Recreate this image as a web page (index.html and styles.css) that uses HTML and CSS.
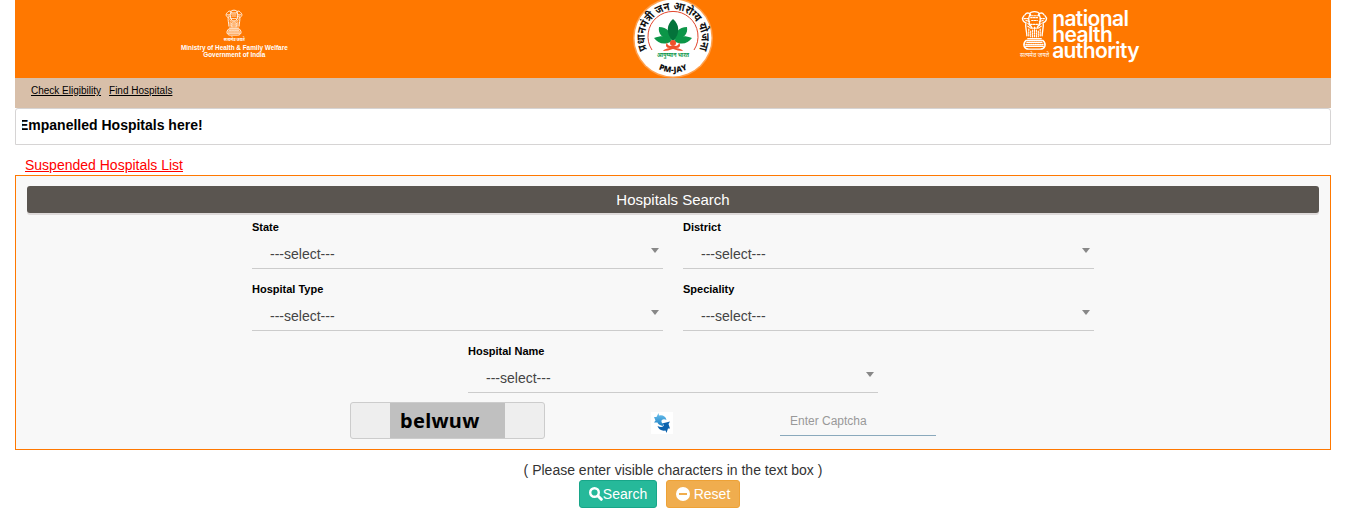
FILE: index.html
```html
<!DOCTYPE html>
<html lang="en">
<head>
  <meta charset="UTF-8">
  <meta name="viewport" content="width=device-width, initial-scale=1.0">
  <title>Hospitals Search</title>
  <link rel="stylesheet" href="styles.css">
</head>
<body>
  <!-- Shared national emblem drawing -->
  <svg class="symbols" width="0" height="0">
    <symbol id="emblem" viewBox="0 0 28 44">
      <g fill="none" stroke="#fff" stroke-linecap="round" stroke-linejoin="round">
        <path stroke-width="1.4" d="M9 4C10 1 18 1 19 4M4 5C6 2 10 3 10 6M24 5C22 2 18 3 18 6M3 6C0 9 2 12 4 13M25 6C28 9 26 12 24 13M9 5C7 9 8 15 11 18M19 5C21 9 20 15 17 18M5 13C4 18 6 22 6 27M23 13C24 18 22 22 22 27"/>
        <path stroke-width="1.2" stroke-dasharray="1.6 1.2" d="M11 6L17 6M10 8L18 8M11 11L17 11M3 9L8 9M20 9L25 9M5 11L9 12M19 12L23 11M10 15L18 15M7 17L10 19M18 19L21 17M11 19L17 19M12 21L12 29M16 21L16 29M8 20L8 28M20 20L20 28M14 18L14 29M7 14L9 16M19 16L21 14M10 22L10 28M18 22L18 28"/>
        <path stroke-width="1.5" d="M7 30H21M5 32C1 36 3 41 8 41H20C25 41 27 36 23 32ZM5 38H23"/>
        <path stroke-width="1.3" stroke-dasharray="1.4 1" d="M6 34H22M5 36H23"/>
      </g>
    </symbol>
  </svg>

  <div class="page">
    <header class="header">
      <div class="header-col">
        <div class="ministry">
          <svg class="ministry-emblem"><use href="#emblem"/></svg>
          <span class="motto">सत्यमेव जयते</span>
          <span>Ministry of Health &amp; Family Welfare</span>
          <span>Government of India</span>
        </div>
      </div>
      <div class="header-col">
        <svg class="pmjay" viewBox="0 0 80 78">
          <defs>
            <path id="ring" d="M16.500 54A28.300 28.300 0 1 1 63.500 54"/>
            <path id="arc-bottom" d="M5.500 38A34.500 34.500 0 0 0 74.500 38"/>
          </defs>
          <circle cx="40" cy="38" r="40" fill="#ffa04d"/>
          <circle cx="40" cy="38" r="38.500" fill="#fff"/>
          <path d="M19 50A25 25 0 1 1 61 50" fill="none" stroke="#e2452c" stroke-width="1"/>
          <text class="seal-top"><textPath href="#ring" startOffset="50%" text-anchor="middle" textLength="112" lengthAdjust="spacingAndGlyphs">प्रधानमंत्री जन आरोग्य योजना</textPath></text>
          <g fill="#0c9648">
            <path d="M40 40C28 39 25 33 26 27C34 27 39 33 40 40Z"/>
            <path d="M40 40C52 39 55 33 54 27C46 27 41 33 40 40Z"/>
            <path d="M39 41C31 46 25 43 21 38C29 35 36 36 39 41Z"/>
            <path d="M41 41C49 46 55 43 59 38C51 35 44 36 41 41Z"/>
          </g>
          <path d="M40 41C32 33 34 24 40 19C46 24 48 33 40 41Z" fill="#04733b"/>
          <g fill="#f0512a">
            <circle cx="40" cy="43" r="3"/>
            <path d="M34 42Q34 46 38 46H42Q46 46 46 42Q49 48 43 48Q49 49 50 51Q45 51 40 49Q35 51 30 51Q31 49 37 48Q31 48 34 42Z"/>
          </g>
          <text class="seal-name" x="40" y="57" text-anchor="middle" textLength="32" lengthAdjust="spacingAndGlyphs">आयुष्मान भारत</text>
          <text class="seal-bottom"><textPath href="#arc-bottom" startOffset="50%" text-anchor="middle" textLength="30">PM-JAY</textPath></text>
        </svg>
      </div>
      <div class="header-col">
        <div class="nha">
          <div class="nha-mark">
            <svg class="nha-emblem"><use href="#emblem"/></svg>
            <span class="motto">सत्यमेव जयते</span>
          </div>
          <div class="nha-name">
            <span>national</span>
            <span>health</span>
            <span>authority</span>
          </div>
        </div>
      </div>
    </header>

    <nav class="nav">
      <a href="#">Check Eligibility</a>
      <a href="#">Find Hospitals</a>
    </nav>

    <div class="ticker">
      <div class="ticker-view"><span class="ticker-text">Empanelled Hospitals here!</span></div>
    </div>

    <a class="suspended" href="#">Suspended Hospitals List</a>

    <main class="panel">
      <h1 class="panel-title">Hospitals Search</h1>

      <div class="fields">
        <div class="field">
          <span class="label">State</span>
          <div class="select">---select---</div>
        </div>
        <div class="field">
          <span class="label">District</span>
          <div class="select">---select---</div>
        </div>
        <div class="field">
          <span class="label">Hospital Type</span>
          <div class="select">---select---</div>
        </div>
        <div class="field">
          <span class="label">Speciality</span>
          <div class="select">---select---</div>
        </div>
        <div class="field field-center">
          <span class="label">Hospital Name</span>
          <div class="select">---select---</div>
        </div>
      </div>

      <div class="captcha-row">
        <div class="captcha"><span class="captcha-image">belwuw</span></div>
        <svg class="refresh" viewBox="0 0 22 22">
          <defs>
            <linearGradient id="light" x1="0" y1="0" x2="0" y2="1">
              <stop offset="0" stop-color="#6fc3ee"/>
              <stop offset="1" stop-color="#1b7fc4"/>
            </linearGradient>
          </defs>
          <rect width="22" height="22" fill="#fff"/>
          <path fill="url(#light)" d="M7.500 1L8 3.500Q14 2.500 15.500 8Q12.500 6.500 10.500 8.500Q10 11 13 12.500L11.500 14Q7 12.500 6.500 10.500L3 10.500L4.500 8.500L3 5L5.500 5Z"/>
          <path fill="#0b62ad" d="M15.500 21L14.500 18.500Q8.500 19.500 6.500 14Q10.500 16 12.500 14L13 12.500L11 11.500L19 9.500L17.500 12L19 16.500L17 16.500Z"/>
        </svg>
        <input class="captcha-input" type="text" placeholder="Enter Captcha">
      </div>
    </main>

    <p class="hint">( Please enter visible characters in the text box )</p>

    <div class="actions">
      <button class="btn btn-search">
        <svg width="14" height="14" viewBox="0 0 14 14"><circle cx="5.500" cy="5.500" r="4.300" fill="none" stroke="#fff" stroke-width="2.400"/><path d="M9 9L12.300 12.300" stroke="#fff" stroke-width="3" stroke-linecap="round"/></svg>Search
      </button>
      <button class="btn btn-reset">
        <svg width="14" height="14" viewBox="0 0 14 14"><circle cx="7" cy="7" r="7" fill="#fff"/><path d="M3 7H11" stroke="#f0ad4e" stroke-width="2"/></svg>
        <span>Reset</span>
      </button>
    </div>
  </div>
</body>
</html>
```
FILE: styles.css
```css
* {
  box-sizing: border-box;
}

body {
  margin: 0;
  font-family: "Liberation Sans", Arial, sans-serif;
  font-size: 14px;
  color: #333;
  background-color: #fff;
  overflow: hidden;
}

.symbols {
  display: block;
}

.page {
  width: 1316px;
  margin-left: 15px;
}

/* Header */
.header {
  display: grid;
  grid-template-columns: repeat(3, 1fr);
  height: 78px;
  background-color: #ff7800;
  color: #fff;
}

.header-col {
  display: flex;
  justify-content: center;
}

.ministry {
  display: flex;
  flex-direction: column;
  align-items: center;
  padding-top: 9px;
  font-size: 6.4px;
  font-weight: bold;
  line-height: 7px;
  white-space: nowrap;
}

.ministry-emblem {
  width: 18px;
  height: 28px;
  margin-bottom: -1px;
}

.motto {
  font-family: "Noto Sans Devanagari", "Noto Sans", sans-serif;
  font-size: 4px;
  line-height: 8px;
  white-space: nowrap;
}

.pmjay {
  width: 80px;
  height: 78px;
}

.seal-top {
  font-family: "Noto Sans Devanagari", "Noto Sans", sans-serif;
  font-size: 11.5px;
  font-weight: bold;
  fill: #111;
}

.seal-name {
  font-family: "Noto Sans Devanagari", "Noto Sans", sans-serif;
  font-size: 6.5px;
  font-weight: bold;
  fill: #0c9648;
}

.seal-bottom {
  font-family: "Open Sans", sans-serif;
  font-size: 8px;
  font-weight: 800;
  fill: #111;
}

.nha {
  display: flex;
  gap: 3px;
  width: 123px;
  margin-right: 60px;
  padding-top: 11px;
}

.nha-mark {
  display: flex;
  flex-direction: column;
  align-items: center;
  width: 29px;
}

.nha-emblem {
  width: 29px;
  height: 42px;
  margin-top: -1px;
}

.nha-mark .motto {
  font-size: 6px;
}

.nha-name {
  display: flex;
  flex-direction: column;
  font-family: Inter, sans-serif;
  font-size: 21px;
  font-weight: 600;
  line-height: 16px;
  letter-spacing: -0.6px;
}

/* Navigation */
.nav {
  display: flex;
  gap: 8px;
  height: 30px;
  padding: 7px 16px;
  background-color: #d8bfa9;
  font-size: 10px;
  line-height: 12px;
}

.nav a {
  color: #000;
}

/* Scrolling notice */
.ticker {
  height: 37px;
  padding: 8px 6px;
  border: 1px solid #d6d4d4;
  border-radius: 3px 3px 0 0;
}

.ticker-view {
  overflow: hidden;
}

.ticker-text {
  display: block;
  margin-left: -3px;
  color: #000;
  font-size: 14px;
  font-weight: bold;
  line-height: 17px;
}

.suspended {
  display: block;
  width: max-content;
  margin: 10px 0 0 10px;
  color: #f00;
  line-height: 20px;
}

/* Search panel */
.panel {
  height: 275px;
  padding: 10px 11px;
  border: 1px solid #ff7800;
  background-color: #f8f8f8;
}

.panel-title {
  height: 27px;
  margin: 0;
  border-radius: 3px;
  background-color: #5a5550;
  box-shadow: 0 2px 0 #dedada;
  color: #fff;
  font-size: 15px;
  font-weight: normal;
  line-height: 28px;
  text-align: center;
}

.fields {
  display: grid;
  grid-template-columns: 411px 411px;
  gap: 8px 20px;
  width: 842px;
  margin: 2px 0 0 225px;
}

.field-center {
  grid-column: 1 / 3;
  width: 410px;
  margin-left: 216px;
}

.label {
  display: block;
  color: #000;
  font-size: 11px;
  font-weight: bold;
  line-height: 24px;
}

.select {
  display: flex;
  justify-content: space-between;
  height: 30px;
  padding: 0 4px 0 18px;
  border-bottom: 1px solid #ccc;
  color: #444;
  line-height: 30px;
}

.select::after {
  content: "";
  height: 0;
  margin-top: 9px;
  border: 4px solid transparent;
  border-top: 5px solid #888;
  border-bottom: 0;
}

.captcha-row {
  display: flex;
  padding: 9px 0 0 323px;
}

.captcha {
  display: flex;
  justify-content: center;
  width: 195px;
  height: 37px;
  border: 1px solid #ccc;
  border-radius: 3px;
  background-color: #eee;
}

.captcha-image {
  width: 115px;
  padding-left: 10px;
  background-color: #c0c0c0;
  color: #000;
  font-family: "Noto Sans", "Open Sans", sans-serif;
  font-size: 20px;
  font-weight: bold;
  line-height: 36px;
  letter-spacing: 0.3px;
}

.refresh {
  width: 22px;
  height: 22px;
  margin: 10px 107px 0 106px;
}

.captcha-input {
  width: 156px;
  height: 34px;
  padding: 7px 10px 3px;
  border: 0;
  border-bottom: 1px solid #8aa9bc;
  background: transparent;
  font-family: inherit;
  font-size: 12px;
}

.captcha-input::placeholder {
  color: #999;
}

/* Hint and buttons */
.hint {
  margin: 10px 0 0;
  line-height: 20px;
  text-align: center;
}

.actions {
  display: flex;
  gap: 9px;
  margin-left: 564px;
}

.btn {
  display: flex;
  align-items: center;
  justify-content: center;
  height: 28px;
  padding: 0;
  border-radius: 3px;
  color: #fff;
  font-family: inherit;
  font-size: 14px;
}

.btn-search {
  width: 78px;
  border: 1px solid #18a689;
  background-color: #26b99a;
}

.btn-reset {
  gap: 4px;
  width: 74px;
  border: 1px solid #eea236;
  background-color: #f0ad4e;
}
```
